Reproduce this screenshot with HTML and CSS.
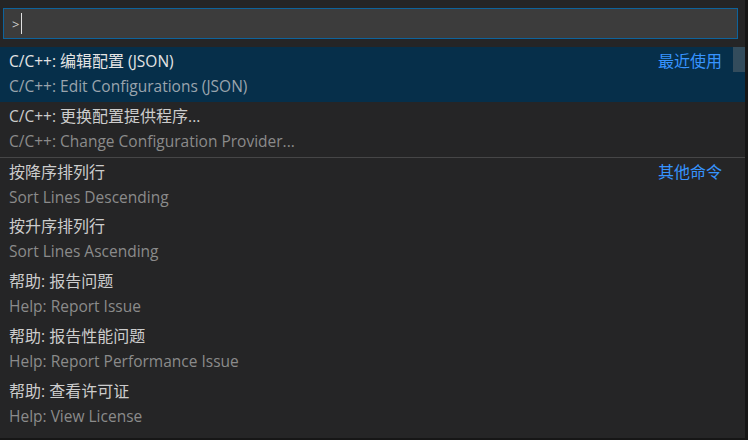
FILE: index.html
```html
<!DOCTYPE html>
<html lang="zh-CN">
<head>
<meta charset="utf-8">
<title>Command Palette</title>
<link rel="stylesheet" href="styles.css">
</head>
<body>
<div class="widget">
  <div class="input-wrap">
    <div class="input"><span class="prompt">&gt;</span><span class="caret"></span></div>
  </div>
  <div class="list">
    <div class="row selected">
      <div class="line1"><span class="label">C/C++: <span class="zh">编辑配置</span> (JSON)</span><span class="tag zh">最近使用</span></div>
      <div class="line2">C/C++: Edit Configurations (JSON)</div>
    </div>
    <div class="row">
      <div class="line1"><span class="label">C/C++: <span class="zh">更换配置提供程序</span>...</span></div>
      <div class="line2">C/C++: Change Configuration Provider...</div>
    </div>
    <div class="row sep">
      <div class="line1"><span class="label"><span class="zh">按降序排列行</span></span><span class="tag zh">其他命令</span></div>
      <div class="line2">Sort Lines Descending</div>
    </div>
    <div class="row">
      <div class="line1"><span class="label"><span class="zh">按升序排列行</span></span></div>
      <div class="line2">Sort Lines Ascending</div>
    </div>
    <div class="row">
      <div class="line1"><span class="label"><span class="zh">帮助</span>: <span class="zh">报告问题</span></span></div>
      <div class="line2">Help: Report Issue</div>
    </div>
    <div class="row">
      <div class="line1"><span class="label"><span class="zh">帮助</span>: <span class="zh">报告性能问题</span></span></div>
      <div class="line2">Help: Report Performance Issue</div>
    </div>
    <div class="row">
      <div class="line1"><span class="label"><span class="zh">帮助</span>: <span class="zh">查看许可证</span></span></div>
      <div class="line2">Help: View License</div>
    </div>
    <div class="scrollbar"></div>
  </div>
</div>
</body>
</html>
```
FILE: styles.css
```css
html, body {
  margin: 0;
  padding: 0;
  background: #161616;
}
body {
  width: 748px;
  height: 440px;
  overflow: hidden;
  font-family: "Open Sans", "Noto Sans CJK SC", sans-serif;
  font-size: 15.5px;
}
.widget {
  width: 745px;
  height: 438px;
  background: #252526;
  box-sizing: border-box;
  padding-bottom: 6px;
}
.input-wrap {
  padding: 8px 7px 8px 3px;
}
.input {
  height: 31px;
  box-sizing: border-box;
  border: 1px solid #0e639c;
  background: #3c3c3c;
  display: flex;
  align-items: center;
  padding-left: 8px;
  color: #cccccc;
  font-size: 13px;
}
.prompt {
  line-height: 20px;
}
.caret {
  width: 1px;
  height: 21px;
  background: #e0e0e0;
  margin-left: 2px;
}
.list {
  position: relative;
}
.row {
  height: 55px;
  box-sizing: border-box;
  padding: 2px 23px 0 9px;
}
.row.sep {
  border-top: 1px solid #464647;
}
.row.selected {
  background: #062f4a;
}
.line1 {
  display: flex;
  justify-content: space-between;
  height: 22px;
  line-height: 22px;
  color: #cccccc;
  white-space: nowrap;
}
.row.selected .line1 {
  color: #e4e4e4;
}
.line2 {
  margin-top: 4px;
  height: 22px;
  line-height: 22px;
  color: #8b8b8b;
  white-space: nowrap;
}
.row.selected .line2 {
  color: #9aa4ad;
}
.zh {
  font-family: "Noto Sans CJK SC", sans-serif;
  font-size: 16px;
}
.tag {
  color: #3794ff;
}
.scrollbar {
  position: absolute;
  top: 0;
  left: 733px;
  width: 12px;
  height: 25px;
  background: rgba(121, 121, 121, 0.4);
}
```
